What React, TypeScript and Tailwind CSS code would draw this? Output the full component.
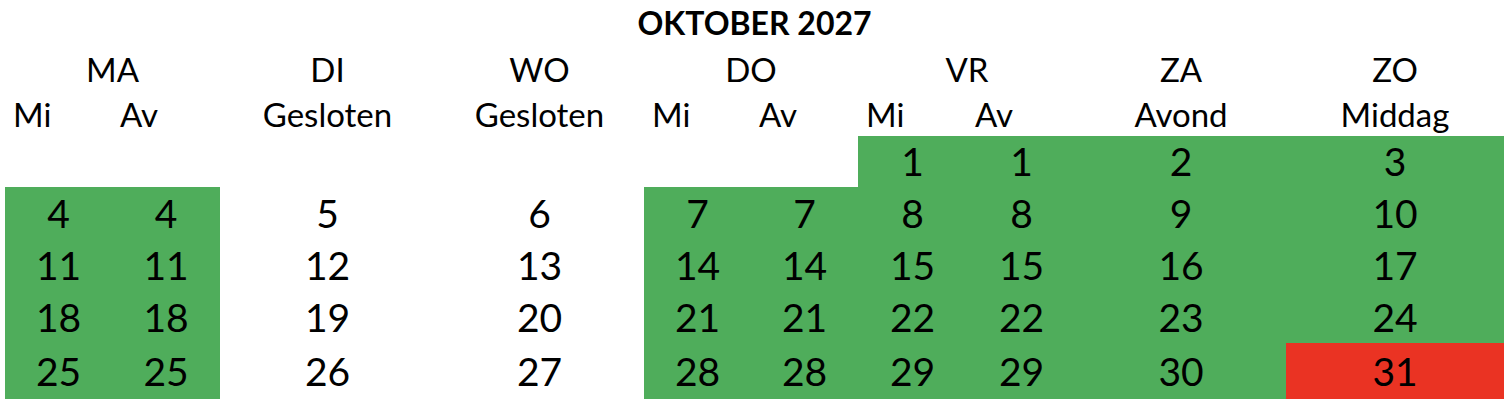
import React from "react";

type Cell = { text: string; span: 1 | 2; fill?: "green" | "red" };

// header row 2: one label per day, each over two sheet columns
const days = ["MA", "DI", "WO", "DO", "VR", "ZA", "ZO"];

// header row 3: Mi/Av split or one label over the day
const subHeads: Cell[] = [
  { text: "Mi", span: 1 },
  { text: "Av", span: 1 },
  { text: "Gesloten", span: 2 },
  { text: "Gesloten", span: 2 },
  { text: "Mi", span: 1 },
  { text: "Av", span: 1 },
  { text: "Mi", span: 1 },
  { text: "Av", span: 1 },
  { text: "Avond", span: 2 },
  { text: "Middag", span: 2 },
];

function week(n: number[], first = false, lastRed = false): Cell[] {
  const [ma, di, wo, dob, vr, za, zo] = n.map((v) => (v > 0 ? String(v) : ""));
  return [
    { text: ma, span: 1, fill: ma ? "green" : undefined },
    { text: ma, span: 1, fill: ma ? "green" : undefined },
    { text: di, span: 2 },
    { text: wo, span: 2 },
    { text: dob, span: 1, fill: first ? undefined : "green" },
    { text: dob, span: 1, fill: first ? undefined : "green" },
    { text: vr, span: 1, fill: "green" },
    { text: vr, span: 1, fill: "green" },
    { text: za, span: 2, fill: "green" },
    { text: zo, span: 2, fill: lastRed ? "red" : "green" },
  ];
}

const weeks: Cell[][] = [
  week([0, 0, 0, 0, 1, 2, 3], true),
  week([4, 5, 6, 7, 8, 9, 10]),
  week([11, 12, 13, 14, 15, 16, 17]),
  week([18, 19, 20, 21, 22, 23, 24]),
  week([25, 26, 27, 28, 29, 30, 31], false, true),
];

const rowHeights = ["h-[51px]", "h-[52px]", "h-[52px]", "h-[52px]", "h-[56px]"];

export default function App() {
  return (
    <div className="w-[1508px] h-[404px] bg-white overflow-hidden font-['Lato',sans-serif] text-black">
      <div className="ml-[5px] w-[1499px] grid grid-cols-[107px_108px_107px_108px_104px_105px_107px_107px_109px_109px_105px_105px_109px_109px]">
        {/* title */}
        <div className="col-span-14 h-[46px] flex items-center justify-center text-[32px] font-bold leading-none">
          OKTOBER 2027
        </div>

        {/* day names */}
        {days.map((d) => (
          <div key={d} className="col-span-2 h-[46px] flex items-center justify-center text-[33px] leading-none">
            {d}
          </div>
        ))}

        {/* Mi / Av / Gesloten */}
        {subHeads.map((s, i) => (
          <div
            key={"s" + i}
            className={
              s.span === 2
                ? "col-span-2 h-[44px] flex items-center justify-center text-[33px] leading-none"
                : "h-[44px] flex items-center pl-2 text-[33px] leading-none"
            }
          >
            {s.text}
          </div>
        ))}

        {/* weeks */}
        {weeks.map((w, r) =>
          w.map((c, i) => (
            <div
              key={r + "-" + i}
              className={[
                rowHeights[r],
                c.span === 2 ? "col-span-2" : "",
                c.fill === "green" ? "bg-[#4fad5b]" : c.fill === "red" ? "bg-[#ea3323]" : "",
                "flex items-center justify-center text-[39px] leading-none",
              ].join(" ")}
            >
              {c.text}
            </div>
          ))
        )}
      </div>
    </div>
  );
}
